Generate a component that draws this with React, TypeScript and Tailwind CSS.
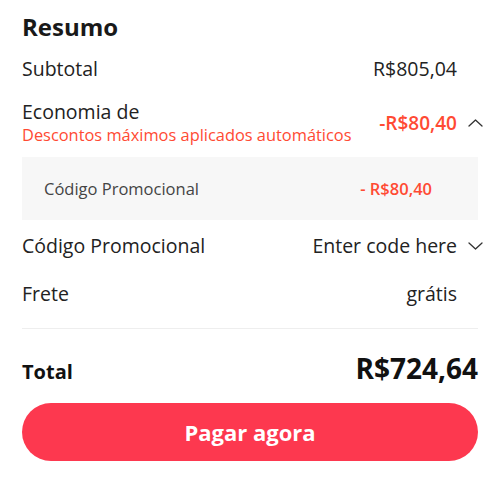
import React from "react";

function Chevron({ up = false }: { up?: boolean }) {
  return (
    <svg
      width="15"
      height="8"
      viewBox="0 0 15 8"
      fill="none"
      stroke="#333333"
      strokeWidth="1.3"
      strokeLinecap="round"
      strokeLinejoin="round"
      className="ml-[11px] -mr-[5px] shrink-0"
    >
      {up ? <polyline points="1,7 7.5,1 14,7" /> : <polyline points="1,1 7.5,7 14,1" />}
    </svg>
  );
}

export default function App() {
  return (
    <div
      className="w-[500px] h-[479px] bg-white px-[22px] pt-[11px] flex flex-col text-[#222222]"
      style={{ fontFamily: '"Open Sans", "Noto Sans", sans-serif' }}
    >
      <h2 className="text-[24px] leading-[32px] font-bold text-[#191919]">Resumo</h2>

      <div className="mt-[14px] flex items-center justify-between pr-[21px] text-[19.5px] leading-[24px]">
        <span>Subtotal</span>
        <span>R$805,04</span>
      </div>

      <div className="mt-[19px] flex items-center justify-between">
        <div className="flex flex-col">
          <span className="text-[19.5px] leading-[24px]">Economia de</span>
          <span className="text-[16.4px] leading-[22px] text-[#ff4a33]">
            Descontos máximos aplicados automáticos
          </span>
        </div>
        <div className="flex items-center">
          <span className="text-[19px] leading-[24px] font-semibold text-[#ff4a33]">-R$80,40</span>
          <Chevron up />
        </div>
      </div>

      <div className="mt-[11px] h-[63px] bg-[#f7f7f7] flex items-center justify-between pl-[22px] pr-[46px] text-[16.5px] leading-[20px]">
        <span className="text-[#444444]">Código Promocional</span>
        <span className="font-semibold text-[#ff4a33]">- R$80,40</span>
      </div>

      <div className="mt-[14px] flex items-center justify-between text-[19.5px] leading-[24px]">
        <span>Código Promocional</span>
        <div className="flex items-center">
          <span>Enter code here</span>
          <Chevron />
        </div>
      </div>

      <div className="mt-[24px] flex items-center justify-between pr-[21px] text-[19.5px] leading-[24px]">
        <span>Frete</span>
        <span>grátis</span>
      </div>

      <div className="mt-[22px] h-px bg-[#eeeeee]" />

      <div className="mt-[23px] flex items-baseline justify-between">
        <span className="text-[20px] leading-[28px] font-bold text-[#111111]">Total</span>
        <span className="text-[28px] leading-[32px] font-bold text-[#111111]">R$724,64</span>
      </div>

      <button
        type="button"
        className="mt-[17px] h-[58px] w-full rounded-full bg-[#fd384f] text-white text-[22px] font-bold"
      >
        Pagar agora
      </button>
    </div>
  );
}
